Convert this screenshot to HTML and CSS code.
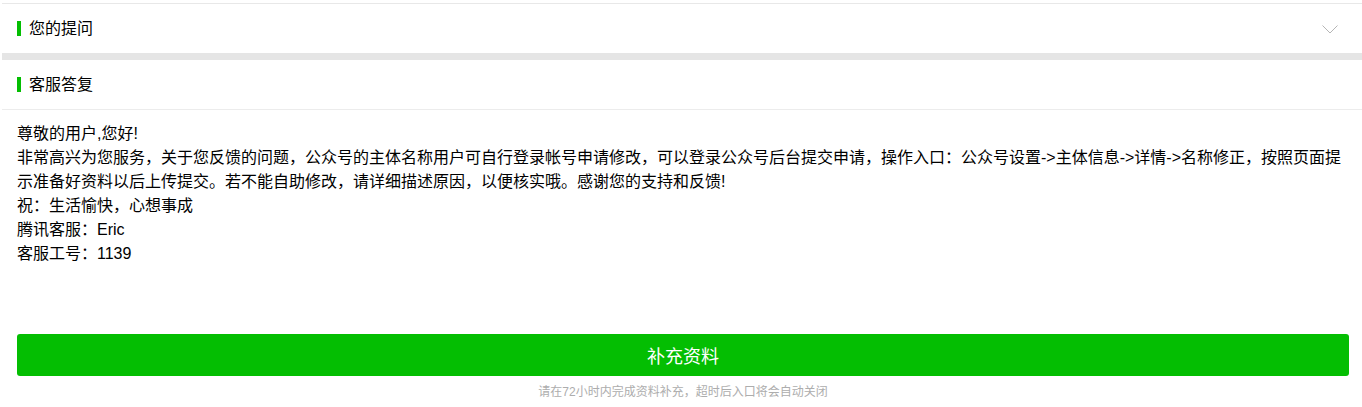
FILE: index.html
```html
<!DOCTYPE html>
<html lang="zh-CN">
<head>
    <meta charset="UTF-8">
    <meta name="viewport" content="width=device-width, initial-scale=1.0">
    <title>客服答复</title>
    <link rel="stylesheet" href="styles.css">
</head>
<body>
    <div class="page">
        <div class="panel question">
            <div class="panel-head">
                <h2 class="panel-title">您的提问</h2>
                <svg class="arrow" width="16" height="10" viewBox="0 0 16 10">
                    <polyline points="0.5,0.5 8,8 15.5,0.5" fill="none" stroke="#b5b5b5" stroke-width="1"/>
                </svg>
            </div>
        </div>
        <div class="panel answer">
            <div class="panel-head">
                <h2 class="panel-title">客服答复</h2>
            </div>
            <div class="reply">
                <p>尊敬的用户,您好!</p>
                <p>非常高兴为您服务，关于您反馈的问题，公众号的主体名称用户可自行登录帐号申请修改，可以登录公众号后台提交申请，操作入口：公众号设置-&gt;主体信息-&gt;详情-&gt;名称修正，按照页面提示准备好资料以后上传提交。若不能自助修改，请详细描述原因，以便核实哦。感谢您的支持和反馈!</p>
                <p>祝：生活愉快，心想事成</p>
                <p>腾讯客服：Eric</p>
                <p>客服工号：1139</p>
            </div>
        </div>
        <div class="actions">
            <button class="btn-primary">补充资料</button>
            <p class="tips">请在72小时内完成资料补充，超时后入口将会自动关闭</p>
        </div>
    </div>
</body>
</html>
```

FILE: styles.css
```css
body {
    margin: 0;
    padding: 0;
    font-family: "Liberation Sans", "Noto Sans CJK SC", sans-serif;
    font-size: 16px;
    color: #000;
    background-color: #fff;
}
.page {
    padding-top: 3px;
    margin-left: 2px;
}
.panel {
    background-color: #fff;
}
.question {
    border-top: 1px solid #e8e8e8;
    border-bottom: 7px solid #e5e5e5;
}
.panel-head {
    display: flex;
    align-items: center;
    justify-content: space-between;
    height: 49px;
    padding: 0 24px 0 15px;
}
.answer .panel-head {
    border-bottom: 1px solid #ececec;
}
.panel-title {
    margin: 0;
    padding-left: 8px;
    border-left: 4px solid #04be02;
    font-size: 16px;
    font-weight: normal;
    line-height: 15px;
}
.arrow {
    display: block;
    margin-top: 2px;
}
.reply {
    padding: 12px 15px 0 15px;
    line-height: 24px;
}
.reply p {
    margin: 0;
}
.actions {
    padding: 68px 13px 0 15px;
    text-align: center;
}
.btn-primary {
    display: block;
    width: 100%;
    height: 42px;
    border: none;
    border-radius: 3px;
    background-color: #04be02;
    color: #fff;
    font-family: "Liberation Sans", "Noto Sans CJK SC", sans-serif;
    font-size: 18px;
    cursor: pointer;
}
.tips {
    margin: 8px 0 0;
    font-size: 12px;
    line-height: 17px;
    color: #adadad;
}
```
